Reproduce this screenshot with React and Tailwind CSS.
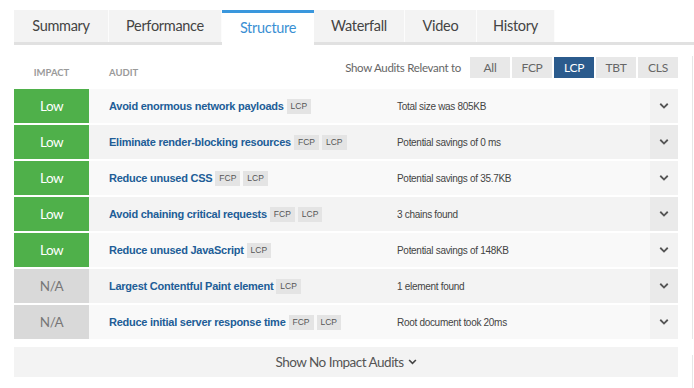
import { ChevronDown } from 'lucide-react';

const tabs = ['Summary', 'Performance', 'Structure', 'Waterfall', 'Video', 'History'];
const tabWidths = ['w-[95px]', 'w-[113px]', 'w-[92px]', 'w-[91px]', 'w-[72px]', 'w-[78px]'];

const filters = ['All', 'FCP', 'LCP', 'TBT', 'CLS'];

const audits = [
  { impact: 'Low', title: 'Avoid enormous network payloads', tags: ['LCP'], detail: 'Total size was 805KB' },
  { impact: 'Low', title: 'Eliminate render-blocking resources', tags: ['FCP', 'LCP'], detail: 'Potential savings of 0 ms' },
  { impact: 'Low', title: 'Reduce unused CSS', tags: ['FCP', 'LCP'], detail: 'Potential savings of 35.7KB' },
  { impact: 'Low', title: 'Avoid chaining critical requests', tags: ['FCP', 'LCP'], detail: '3 chains found' },
  { impact: 'Low', title: 'Reduce unused JavaScript', tags: ['LCP'], detail: 'Potential savings of 148KB' },
  { impact: 'N/A', title: 'Largest Contentful Paint element', tags: ['LCP'], detail: '1 element found' },
  { impact: 'N/A', title: 'Reduce initial server response time', tags: ['FCP', 'LCP'], detail: 'Root document took 20ms' },
];

function Chevron({ className }) {
  return (
    <svg viewBox="0 0 10 7" className={className} fill="currentColor">
      <path d="M0.6 1.4 L1.9 0.1 L5 3.2 L8.1 0.1 L9.4 1.4 L5 5.8 Z" />
    </svg>
  );
}

export default function App() {
  return (
    <div className="relative w-[694px] h-[388px] bg-white overflow-hidden font-['Lato',sans-serif]">
      {/* onglets */}
      <div className="pt-[10px] pl-[14px]">
        <div className="flex border-b-[3px] border-[#e1e1e1] h-[35px]">
          {tabs.map((t, i) =>
            t === 'Structure' ? (
              <div
                key={t}
                className={`${tabWidths[i]} h-[35px] -mb-[3px] bg-white border-t-[3px] border-[#3a97dd] flex items-center justify-center text-[14.5px] tracking-[-0.3px] text-[#3a8fd3] pb-[3px]`}
              >
                {t}
              </div>
            ) : (
              <div
                key={t}
                className={`${tabWidths[i]} h-[32px] bg-[#f3f3f3] border-r border-[#fcfcfc] flex items-center justify-center text-[14.5px] tracking-[-0.3px] text-[#444]`}
              >
                {t}
              </div>
            )
          )}
        </div>
      </div>

      <div className="mx-[14px] w-[664px]">
        {/* en-tête + filtres */}
        <div className="flex items-end h-[44px] pb-[7px]">
          <div className="w-[75px] text-center text-[9.5px] font-bold text-[#9a9a9a] mb-[2px]">IMPACT</div>
          <div className="ml-[20px] text-[9.5px] font-bold text-[#9a9a9a] mb-[2px]">AUDIT</div>
          <div className="ml-auto flex items-center self-start mt-[12px]">
            <span className="text-[11.5px] tracking-[-0.3px] text-[#666] mr-[7px]">Show Audits Relevant to</span>
            {filters.map((f) => (
              <div
                key={f}
                className={`w-[40px] h-[21px] ml-[2px] flex items-center justify-center text-[12px] tracking-[-0.3px] ${
                  f === 'LCP' ? 'bg-[#2b5b8d] text-white' : 'bg-[#e8e8e8] text-[#666]'
                }`}
              >
                {f}
              </div>
            ))}
          </div>
        </div>

        {/* lignes d'audit */}
        <div className="flex flex-col gap-[2px]">
          {audits.map((a, i) => {
            const odd = i % 2 === 0;
            return (
              <div key={a.title} className={`flex h-[34px] ${odd ? 'bg-[#f9f9f9]' : 'bg-[#f3f3f3]'}`}>
                <div
                  className={`w-[75px] flex items-center justify-center text-[13.5px] tracking-[-0.5px] ${
                    a.impact === 'Low' ? 'bg-[#4fb04a] text-white' : 'bg-[#d9d9d9] text-[#777]'
                  }`}
                >
                  {a.impact}
                </div>
                <div className="w-[308px] pl-[20px] flex items-center font-['Liberation_Sans',Arial,sans-serif]">
                  <span className="text-[11px] font-bold text-[#215d97] tracking-[-0.25px]">{a.title}</span>
                  {a.tags.map((tag) => (
                    <span key={tag} className="ml-[3px] bg-[#e4e4e4] text-[#555] text-[8.5px] px-[4px] py-[2px] leading-[11px]">
                      {tag}
                    </span>
                  ))}
                </div>
                <div className="flex-1 flex items-center text-[10px] tracking-[-0.3px] text-[#444] font-['Liberation_Sans',Arial,sans-serif]">
                  {a.detail}
                </div>
                <div className={`w-[28px] flex items-center justify-center text-[#555] ${odd ? 'bg-[#f2f2f2]' : 'bg-[#eaeaea]'}`}>
                  <Chevron className="w-[10px] h-[7px]" />
                </div>
              </div>
            );
          })}
        </div>

        {/* bouton */}
        <div className="mt-[8px] h-[30px] bg-[#f3f3f3] flex items-center justify-center text-[13.5px] tracking-[-0.5px] text-[#555]">
          Show No Impact Audits
          <Chevron className="ml-[4px] w-[9px] h-[7px] text-[#444]" />
        </div>
      </div>

      {/* bordure de défilement à droite */}
      <div className="absolute right-[1px] top-[56px] h-[283px] w-px bg-[#e6e6e6]" />
      <div className="absolute right-[1px] top-[355px] h-[40px] w-px bg-[#e6e6e6]" />
    </div>
  );
}
